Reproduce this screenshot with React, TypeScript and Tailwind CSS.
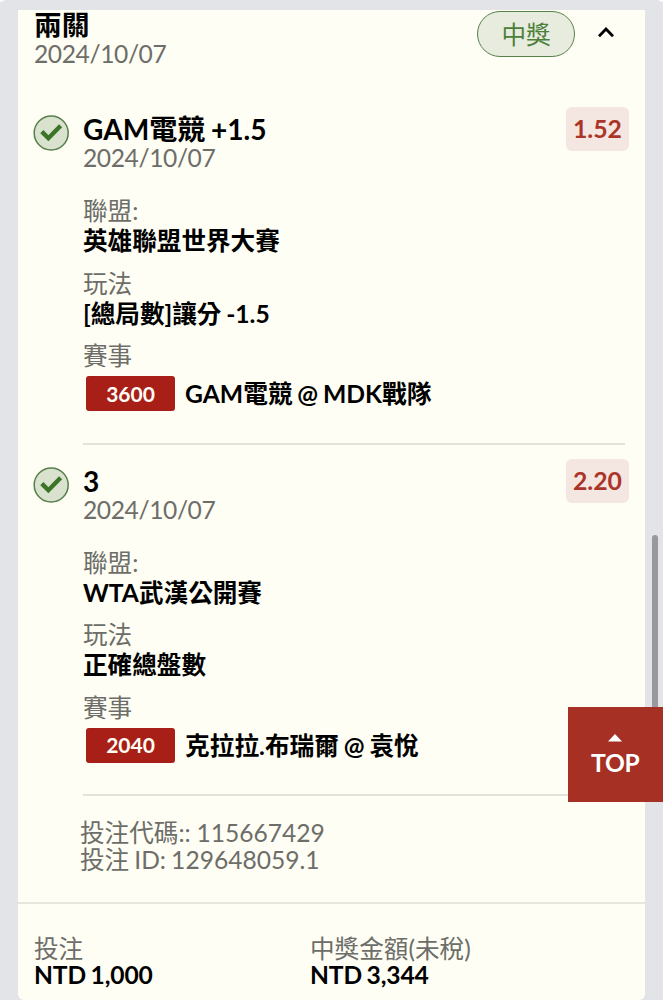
import React from 'react';

type Leg = {
  title: string;
  date: string;
  odds: string;
  league: string;
  play: string;
  code: string;
  match: string;
};

const legs: Leg[] = [
  {
    title: 'GAM電競 +1.5',
    date: '2024/10/07',
    odds: '1.52',
    league: '英雄聯盟世界大賽',
    play: '[總局數]讓分 -1.5',
    code: '3600',
    match: 'GAM電競 @ MDK戰隊',
  },
  {
    title: '3',
    date: '2024/10/07',
    odds: '2.20',
    league: 'WTA武漢公開賽',
    play: '正確總盤數',
    code: '2040',
    match: '克拉拉.布瑞爾 @ 袁悅',
  },
];

function WonIcon() {
  return (
    <svg viewBox="0 0 36 36" className="mt-2 h-9 w-9 shrink-0" fill="none">
      <circle cx="18.2" cy="18" r="17" fill="#d8e2cf" stroke="#57804a" strokeWidth="1.5" />
      <path d="M8.8 16.6 15.4 23.2 27.6 10.8" stroke="#3b7328" strokeWidth="4.4" />
    </svg>
  );
}

function Field({ label, value }: { label: string; value: string }) {
  return (
    <div className="mb-[12.5px]">
      <div className="h-[30px] text-[#6d6d69]">{label}</div>
      <div className="h-[30px] font-bold">{value}</div>
    </div>
  );
}

function LegCard({ leg }: { leg: Leg }) {
  return (
    <section className="flex h-[351.5px] pl-[15px] pr-4">
      <WonIcon />
      <div className="ml-[14px] flex min-w-0 flex-1 flex-col">
        <div className="flex justify-between">
          <div className="pt-[7px]">
            <div className="h-[29px] text-[28.1px] font-bold">{leg.title}</div>
            <div className="h-[30px] tracking-[-0.4px] text-[#6d6d69]">{leg.date}</div>
          </div>
          <div className="flex h-11 w-[63px] items-center justify-center rounded-md bg-[#f4e6e0] text-[24.8px] font-bold text-[#ac352a]">
            {leg.odds}
          </div>
        </div>
        <div className="mt-[23px]">
          <Field label="聯盟:" value={leg.league} />
          <Field label="玩法" value={leg.play} />
          <div className="h-[30px] text-[#6d6d69]">賽事</div>
          <div className="mt-[5px] flex h-[35px] items-center">
            <span className="ml-[3px] flex h-[35px] w-[89px] items-center justify-center rounded-[3px] bg-[#a71f17] text-[21px] font-bold text-[#fffdf5]">
              {leg.code}
            </span>
            <span className="ml-[10px] pt-px text-[24.7px] font-bold">{leg.match}</span>
          </div>
        </div>
        <div className="mr-1 mt-[31.5px] h-[2px] bg-[#e3e3dc]" />
      </div>
    </section>
  );
}

export default function App() {
  return (
    <div className="relative h-[1000px] w-[663px] overflow-hidden bg-[#e3e4e8] pl-[18px] pr-[18px] pt-[10px] font-['Lato','Noto_Sans_CJK_TC',sans-serif] text-[24.6px] leading-[30px] text-black [word-spacing:-1.2px]">
      <div className="absolute -left-3 -top-6 h-[26px] w-[22px] rounded-full bg-[#fefef4]" />
      <div className="absolute -right-3 -top-6 h-[26px] w-[22px] rounded-full bg-[#fefef4]" />
      <main className="h-[990px] rounded-b-md bg-[#fefef4]">
        <header className="flex h-[97px] items-start pl-4 pr-[30px]">
          <div className="flex-1">
            <div className="h-[29px] text-[27.8px] font-bold leading-[30px]">兩關</div>
            <div className="tracking-[-0.4px] text-[#6d6d69]">2024/10/07</div>
          </div>
          <div className="mt-px flex h-[46px] w-[98px] items-center justify-center rounded-full border-[1.5px] border-[#57804a] bg-[#e8ecdf] pt-px text-[#4c803a]">
            中獎
          </div>
          <svg viewBox="0 0 18 12" className="ml-[22px] mt-4 h-3 w-[18px]" fill="none">
            <path d="M2 10.2 9 3 16 10.2" stroke="#000" strokeWidth="2.8" />
          </svg>
        </header>
        {legs.map((leg) => (
          <LegCard key={leg.code} leg={leg} />
        ))}
        <div className="h-[92px] pl-[62px] pt-[9px] leading-[27px] text-[#6d6d69]">
          <div className="[word-spacing:-0.5px]">投注代碼:: 115667429</div>
          <div>投注 ID: 129648059.1</div>
        </div>
        <footer className="flex border-t-2 border-[#e6e6de] pl-4 pt-[31px] leading-[27px]">
          <div className="w-[276px]">
            <div className="text-[#6d6d69]">投注</div>
            <div className="-mt-px font-bold tracking-[-0.15px]">NTD 1,000</div>
          </div>
          <div>
            <div className="text-[#6d6d69]">中獎金額(未稅)</div>
            <div className="-mt-px font-bold tracking-[-0.15px]">NTD 3,344</div>
          </div>
        </footer>
      </main>
      <div className="absolute left-[652px] top-[535px] h-[220px] w-[6px] rounded-full bg-[#98999d]" />
      <button className="absolute left-[567.5px] top-[706.5px] flex h-[95px] w-[95.5px] flex-col items-center bg-[#a63024] pt-[27px] font-bold text-white">
        <svg viewBox="0 0 14 8" className="h-2 w-[14px]">
          <path d="M7 0 14 7.5H0Z" fill="#fff" />
        </svg>
        <span className="mt-[6px] tracking-[-0.3px]">TOP</span>
      </button>
    </div>
  );
}
